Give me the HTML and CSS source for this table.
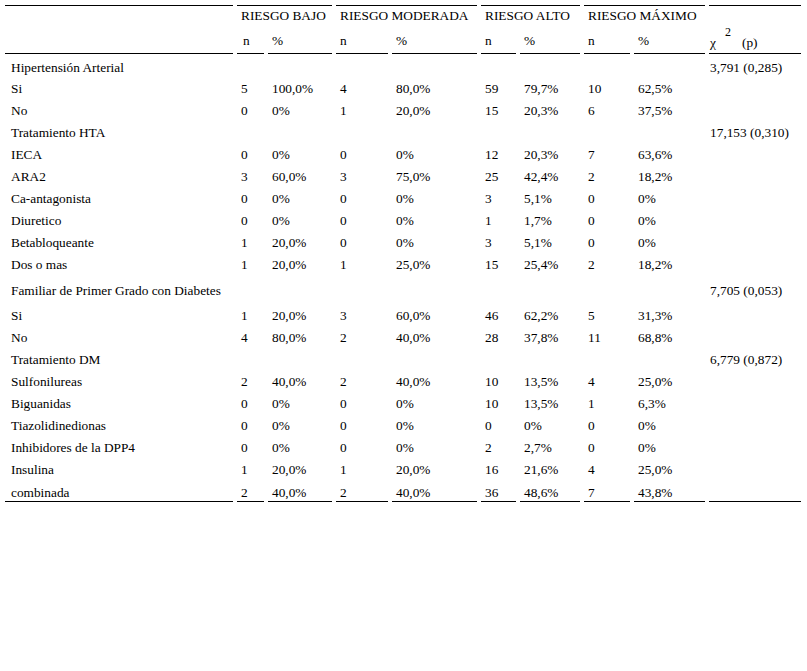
FILE: index.html
```html
<!DOCTYPE html>
<html lang="es">
<head>
<meta charset="utf-8">
<title>Tabla de riesgo</title>
<link rel="stylesheet" href="styles.css">
</head>
<body>
<table class="tbl">
  <colgroup>
    <col class="c-label">
    <col class="c-n1"><col class="c-p1">
    <col class="c-n2"><col class="c-p2">
    <col class="c-n3"><col class="c-p3">
    <col class="c-n4"><col class="c-p4">
    <col class="c-chi">
  </colgroup>
  <thead>
    <tr class="h1">
      <th class="top bot" rowspan="2"></th>
      <th class="top" colspan="2">RIESGO BAJO</th>
      <th class="top" colspan="2">RIESGO MODERADA</th>
      <th class="top" colspan="2">RIESGO ALTO</th>
      <th class="top" colspan="2">RIESGO MÁXIMO</th>
      <th class="top bot chi" rowspan="2"><span class="chi-sym">χ</span><span class="sup">2</span><span class="chi-p">(p)</span></th>
    </tr>
    <tr class="h2">
      <th class="bot">n</th><th class="bot">%</th>
      <th class="bot">n</th><th class="bot">%</th>
      <th class="bot">n</th><th class="bot">%</th>
      <th class="bot">n</th><th class="bot">%</th>
    </tr>
  </thead>
  <tbody>
    <tr class="cat first"><td>Hipertensión Arterial</td><td></td><td></td><td></td><td></td><td></td><td></td><td></td><td></td><td class="chi">3,791 (0,285)</td></tr>
    <tr><td>Si</td><td>5</td><td>100,0%</td><td>4</td><td>80,0%</td><td>59</td><td>79,7%</td><td>10</td><td>62,5%</td><td class="chi"></td></tr>
    <tr><td>No</td><td>0</td><td>0%</td><td>1</td><td>20,0%</td><td>15</td><td>20,3%</td><td>6</td><td>37,5%</td><td class="chi"></td></tr>
    <tr class="cat"><td>Tratamiento HTA</td><td></td><td></td><td></td><td></td><td></td><td></td><td></td><td></td><td class="chi">17,153 (0,310)</td></tr>
    <tr><td>IECA</td><td>0</td><td>0%</td><td>0</td><td>0%</td><td>12</td><td>20,3%</td><td>7</td><td>63,6%</td><td class="chi"></td></tr>
    <tr><td>ARA2</td><td>3</td><td>60,0%</td><td>3</td><td>75,0%</td><td>25</td><td>42,4%</td><td>2</td><td>18,2%</td><td class="chi"></td></tr>
    <tr><td>Ca-antagonista</td><td>0</td><td>0%</td><td>0</td><td>0%</td><td>3</td><td>5,1%</td><td>0</td><td>0%</td><td class="chi"></td></tr>
    <tr><td>Diuretico</td><td>0</td><td>0%</td><td>0</td><td>0%</td><td>1</td><td>1,7%</td><td>0</td><td>0%</td><td class="chi"></td></tr>
    <tr><td>Betabloqueante</td><td>1</td><td>20,0%</td><td>0</td><td>0%</td><td>3</td><td>5,1%</td><td>0</td><td>0%</td><td class="chi"></td></tr>
    <tr><td>Dos o mas</td><td>1</td><td>20,0%</td><td>1</td><td>25,0%</td><td>15</td><td>25,4%</td><td>2</td><td>18,2%</td><td class="chi"></td></tr>
    <tr class="cat tall"><td>Familiar de Primer Grado con Diabetes</td><td></td><td></td><td></td><td></td><td></td><td></td><td></td><td></td><td class="chi">7,705 (0,053)</td></tr>
    <tr><td>Si</td><td>1</td><td>20,0%</td><td>3</td><td>60,0%</td><td>46</td><td>62,2%</td><td>5</td><td>31,3%</td><td class="chi"></td></tr>
    <tr><td>No</td><td>4</td><td>80,0%</td><td>2</td><td>40,0%</td><td>28</td><td>37,8%</td><td>11</td><td>68,8%</td><td class="chi"></td></tr>
    <tr class="cat"><td>Tratamiento DM</td><td></td><td></td><td></td><td></td><td></td><td></td><td></td><td></td><td class="chi">6,779 (0,872)</td></tr>
    <tr><td>Sulfonilureas</td><td>2</td><td>40,0%</td><td>2</td><td>40,0%</td><td>10</td><td>13,5%</td><td>4</td><td>25,0%</td><td class="chi"></td></tr>
    <tr><td>Biguanidas</td><td>0</td><td>0%</td><td>0</td><td>0%</td><td>10</td><td>13,5%</td><td>1</td><td>6,3%</td><td class="chi"></td></tr>
    <tr><td>Tiazolidinedionas</td><td>0</td><td>0%</td><td>0</td><td>0%</td><td>0</td><td>0%</td><td>0</td><td>0%</td><td class="chi"></td></tr>
    <tr><td>Inhibidores de la DPP4</td><td>0</td><td>0%</td><td>0</td><td>0%</td><td>2</td><td>2,7%</td><td>0</td><td>0%</td><td class="chi"></td></tr>
    <tr><td>Insulina</td><td>1</td><td>20,0%</td><td>1</td><td>20,0%</td><td>16</td><td>21,6%</td><td>4</td><td>25,0%</td><td class="chi"></td></tr>
    <tr class="last"><td>combinada</td><td>2</td><td>40,0%</td><td>2</td><td>40,0%</td><td>36</td><td>48,6%</td><td>7</td><td>43,8%</td><td class="chi"></td></tr>
  </tbody>
</table>
</body>
</html>
```

FILE: styles.css
```css
html, body {
  margin: 0;
  padding: 0;
  background: #ffffff;
}

body {
  font-family: "Liberation Serif", "Times New Roman", serif;
  font-size: 13.33px;
  color: #000000;
}

.tbl {
  margin: 5px 0 0 1px;
  border-collapse: separate;
  border-spacing: 4px 0;
  table-layout: fixed;
  width: 804px;
}

.c-label { width: 228px; }
.c-n1 { width: 27px; }
.c-p1 { width: 64px; }
.c-n2 { width: 52px; }
.c-p2 { width: 85px; }
.c-n3 { width: 35px; }
.c-p3 { width: 60px; }
.c-n4 { width: 46px; }
.c-p4 { width: 71px; }
.c-chi { width: 92px; }

.tbl th,
.tbl td {
  font-weight: normal;
  text-align: left;
  white-space: nowrap;
  line-height: 20px;
  padding: 0 0 2px 4px;
  vertical-align: top;
}

.tbl td:first-child,
.tbl th:first-child {
  padding-left: 6px;
}

.tbl .chi {
  padding-left: 1px;
}

.top { border-top: 1px solid #000; }
.bot { border-bottom: 1px solid #000; }

.h1 th {
  padding-top: 0;
  padding-bottom: 5px;
}

.h2 th {
  padding-top: 0;
  padding-bottom: 2px;
}

.tbl th.chi {
  vertical-align: bottom;
  padding-bottom: 0;
}

.chi-sym {
  margin-right: 9px;
}

.sup {
  vertical-align: 11px;
  font-size: 12px;
  line-height: 0;
}

.chi-p {
  margin-left: 11px;
}

.first td {
  padding-top: 4px;
  padding-bottom: 1px;
}

.tall td {
  padding-top: 4px;
  padding-bottom: 5px;
}

.last td {
  border-bottom: 1px solid #000;
  padding-top: 2px;
  padding-bottom: 0;
  line-height: 17px;
}
```
